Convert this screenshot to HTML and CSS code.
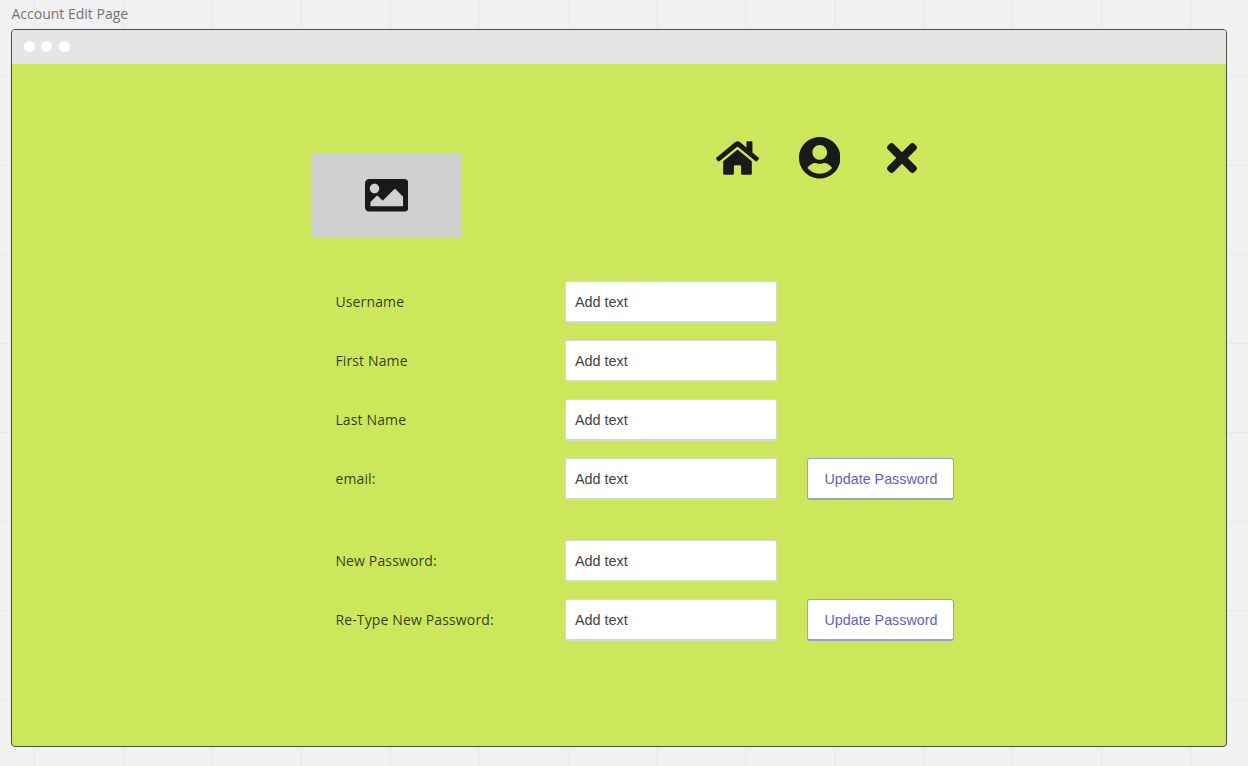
FILE: index.html
```html
<!DOCTYPE html>
<html lang="en">
<head>
<meta charset="utf-8">
<title>Account Edit Page</title>
<link rel="stylesheet" href="styles.css">
</head>
<body>
<h1 class="board-title">Account Edit Page</h1>
<main class="window">
  <div class="window-bar"><span class="dot"></span><span class="dot"></span><span class="dot"></span></div>
  <div class="page">
    <header class="header">
      <div class="image-box">
        <svg class="icon-image" viewBox="0 64 512 384"><path d="M464 448H48c-26.510 0-48-21.490-48-48V112c0-26.510 21.490-48 48-48h416c26.510 0 48 21.490 48 48v288c0 26.510-21.490 48-48 48zM112 120c-30.928 0-56 25.072-56 56s25.072 56 56 56 56-25.072 56-56-25.072-56-56-56zM64 384h384V272l-87.515-87.515c-4.686-4.686-12.284-4.686-16.971 0L208 320l-55.515-55.515c-4.686-4.686-12.284-4.686-16.971 0L64 336v48z"/></svg>
      </div>
      <nav class="nav">
        <svg class="icon-home" viewBox="0 32 576 448"><path d="M280.370 148.260L96 300.110V464a16 16 0 0 0 16 16l112.060-.290a16 16 0 0 0 15.920-16V368a16 16 0 0 1 16-16h64a16 16 0 0 1 16 16v95.640a16 16 0 0 0 16 16.050L464 480a16 16 0 0 0 16-16V300L295.670 148.260a12.190 12.190 0 0 0-15.300 0zM571.600 251.470L488 182.560V44.050a12 12 0 0 0-12-12h-56a12 12 0 0 0-12 12v72.610L318.470 43a48 48 0 0 0-61 0L4.340 251.470a12 12 0 0 0-1.600 16.900l25.500 31A12 12 0 0 0 45.150 301l235.220-193.740a12.190 12.190 0 0 1 15.300 0L530.900 301a12 12 0 0 0 16.900-1.600l25.500-31a12 12 0 0 0-1.700-16.930z"/></svg>
        <svg class="icon-user" viewBox="0 8 496 496"><path d="M248 8C111 8 0 119 0 256s111 248 248 248 248-111 248-248S385 8 248 8zm0 96c48.600 0 88 39.400 88 88s-39.400 88-88 88-88-39.400-88-88 39.400-88 88-88zm0 344c-58.700 0-111.300-26.600-146.500-68.200 18.800-35.400 55.600-59.800 98.500-59.800 2.400 0 4.800.4 7.100 1.100 13 4.200 26.600 6.900 40.900 6.900 14.300 0 28-2.700 40.900-6.900 2.300-.7 4.700-1.100 7.100-1.100 42.900 0 79.700 24.400 98.500 59.800C359.300 421.400 306.700 448 248 448z"/></svg>
        <svg class="icon-close" viewBox="0 80 352 352"><path d="M242.720 256l100.070-100.070c12.280-12.280 12.280-32.190 0-44.480l-22.240-22.240c-12.280-12.280-32.190-12.280-44.480 0L176 189.280 75.930 89.210c-12.280-12.280-32.190-12.280-44.480 0L9.210 111.450c-12.280 12.280-12.280 32.190 0 44.480L109.280 256 9.210 356.070c-12.280 12.280-12.280 32.190 0 44.480l22.240 22.240c12.280 12.280 32.200 12.280 44.480 0L176 322.720l100.070 100.070c12.280 12.280 32.200 12.280 44.480 0l22.240-22.240c12.280-12.280 12.280-32.190 0-44.480L242.720 256z"/></svg>
      </nav>
    </header>
    <form class="form">
      <label class="label" for="username">Username</label><input class="field" id="username" placeholder="Add text">
      <label class="label" for="first">First Name</label><input class="field" id="first" placeholder="Add text">
      <label class="label" for="last">Last Name</label><input class="field" id="last" placeholder="Add text">
      <label class="label" for="email">email:</label><input class="field" id="email" placeholder="Add text"><button class="button" type="button">Update Password</button>
      <div class="spacer"></div>
      <label class="label" for="new">New Password:</label><input class="field" id="new" placeholder="Add text">
      <label class="label" for="retype">Re-Type New Password:</label><input class="field" id="retype" placeholder="Add text"><button class="button" type="button">Update Password</button>
    </form>
  </div>
</main>
</body>
</html>
```
FILE: styles.css
```css
* { box-sizing: border-box; }

body {
  margin: 0;
  height: 766px;
  padding: 4px 21px 0 11px;
  overflow: hidden;
  background-color: #f1f1f1;
  background-image:
    linear-gradient(90deg, #e8e8e8 1px, transparent 1px),
    linear-gradient(#e8e8e8 1px, transparent 1px);
  background-size: 88.95px 89px;
  background-position: 34px 76px;
  font-family: "Open Sans", "Noto Sans", sans-serif;
}

.board-title {
  margin: 0;
  height: 25px;
  padding-left: 0.5px;
  font-size: 14px;
  font-weight: 400;
  line-height: 20px;
  color: #747474;
}

.window {
  width: 1216px;
  height: 718px;
  border: 1px solid #4c4c44;
  border-radius: 4px;
  background: #cce75b;
  overflow: hidden;
}

.window-bar {
  display: flex;
  align-items: center;
  gap: 6.8px;
  height: 34px;
  padding: 0 0 1px 11.5px;
  background: #e5e5e5;
}

.dot {
  width: 11px;
  height: 11px;
  border-radius: 50%;
  background: #fff;
}

.page { padding: 73px 0 0 299px; }

.header {
  display: flex;
  align-items: flex-start;
  height: 144px;
}

.image-box {
  display: flex;
  align-items: center;
  justify-content: center;
  width: 151px;
  height: 85px;
  margin-top: 16px;
  background: #d1d1d1;
}

.header svg { display: block; fill: #1a1a1a; }

.icon-image { width: 43.5px; height: 32.6px; }

.nav {
  display: flex;
  align-items: center;
  height: 42px;
  margin-left: 254px;
}

.icon-home { width: 43px; height: 34px; }
.icon-user { width: 41.5px; height: 41.5px; margin-left: 39.6px; }
.icon-close { width: 30px; height: 30px; margin-left: 46.7px; margin-bottom: 1px; }

.form {
  display: grid;
  grid-template-columns: 230px 212px 147px;
  grid-auto-rows: min-content;
  row-gap: 17px;
  padding-left: 24.4px;
}

.label {
  grid-column: 1;
  font-size: 14px;
  letter-spacing: 0.14px;
  line-height: 41px;
  color: rgba(0, 0, 0, 0.76);
}

.field {
  grid-column: 2;
  width: 212px;
  height: 42px;
  margin-left: -0.4px;
  padding: 1px 9px 0;
  border: 1px solid #d5d8cc;
  border-bottom-width: 2px;
  border-radius: 2px;
  background: #fff;
  font: 14.4px "Liberation Sans", sans-serif;
  color: #444;
}

.field::placeholder { color: #444; opacity: 1; }

.button {
  grid-column: 3;
  width: 147px;
  height: 42px;
  margin-left: 29.6px;
  padding: 1px 0 0 1px;
  border: 1px solid #9c9fd0;
  border-bottom-width: 2px;
  border-radius: 3px;
  background: #fff;
  font: 14.3px "Liberation Sans", sans-serif;
  color: #5f62b8;
  white-space: nowrap;
}

.spacer { grid-column: 1 / -1; height: 6px; }
```
